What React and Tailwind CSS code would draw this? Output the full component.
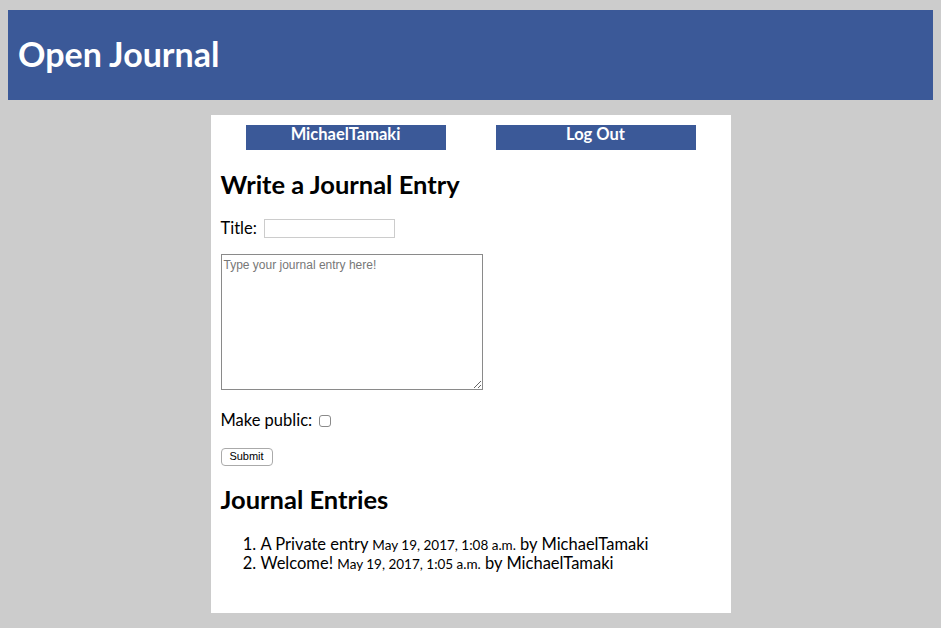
import React from 'react';

const entries = [
  { title: 'A Private entry', date: 'May 19, 2017, 1:08 a.m.', author: 'MichaelTamaki' },
  { title: 'Welcome!', date: 'May 19, 2017, 1:05 a.m.', author: 'MichaelTamaki' },
];

const App = () => {
  return (
    <div className="min-h-[628px] bg-[#cccccc] px-2 pt-[10px] pb-[15px] font-['Lato',sans-serif] text-black">
      <header className="h-[90px] bg-[#3b5998] flex items-center px-[10px]">
        <h1 className="text-[34px] font-bold text-white leading-none pb-[2px]">Open Journal</h1>
      </header>

      <main className="w-[520px] mx-auto mt-[15px] bg-white px-[10px] pt-[10px] pb-[40px]">
        <nav className="flex gap-[50px] pl-[25px]">
          <a href="#" className="w-[200px] h-[25px] bg-[#3b5998] text-white font-bold text-[16.5px] text-center leading-[19px]">
            MichaelTamaki
          </a>
          <a href="#" className="w-[200px] h-[25px] bg-[#3b5998] text-white font-bold text-[16.5px] text-center leading-[19px]">
            Log Out
          </a>
        </nav>

        <h2 className="text-[25.5px] font-bold mt-[20px] leading-[28px]">Write a Journal Entry</h2>

        <form className="mt-[18px]">
          <label className="flex items-center gap-[7px] text-[16.5px]">
            Title:
            <input type="text" className="w-[131px] h-[19px] border border-[#cccccc] px-1 text-[13px]" />
          </label>

          <textarea
            placeholder="Type your journal entry here!"
            className="mt-[13px] block w-[262px] h-[136px] border border-[#8a8a8a] px-[2px] py-[1px] text-[12px] font-['Liberation_Sans',sans-serif] placeholder:text-[#777777]"
          />

          <label className="mt-[20px] flex items-center gap-[7px] text-[16.5px] leading-[20px]">
            Make public:
            <span className="w-[12px] h-[12px] border border-[#8a8a8a] rounded-[3px] bg-white mt-[2px]" />
          </label>

          <button
            type="button"
            className="mt-[18px] block w-[52px] h-[18px] border border-[#aaaaaa] rounded-[4px] bg-white text-[11px] leading-none font-['Liberation_Sans',sans-serif]"
          >
            Submit
          </button>
        </form>

        <h2 className="text-[25.5px] font-bold mt-[19px] leading-[28px]">Journal Entries</h2>

        <ol className="list-decimal pl-[40px] mt-[22px] text-[16.5px] leading-[19px]">
          {entries.map((e) => (
            <li key={e.title}>
              {e.title} <span className="text-[13.5px] leading-none">{e.date}</span> by {e.author}
            </li>
          ))}
        </ol>
      </main>
    </div>
  );
};

export default App;
